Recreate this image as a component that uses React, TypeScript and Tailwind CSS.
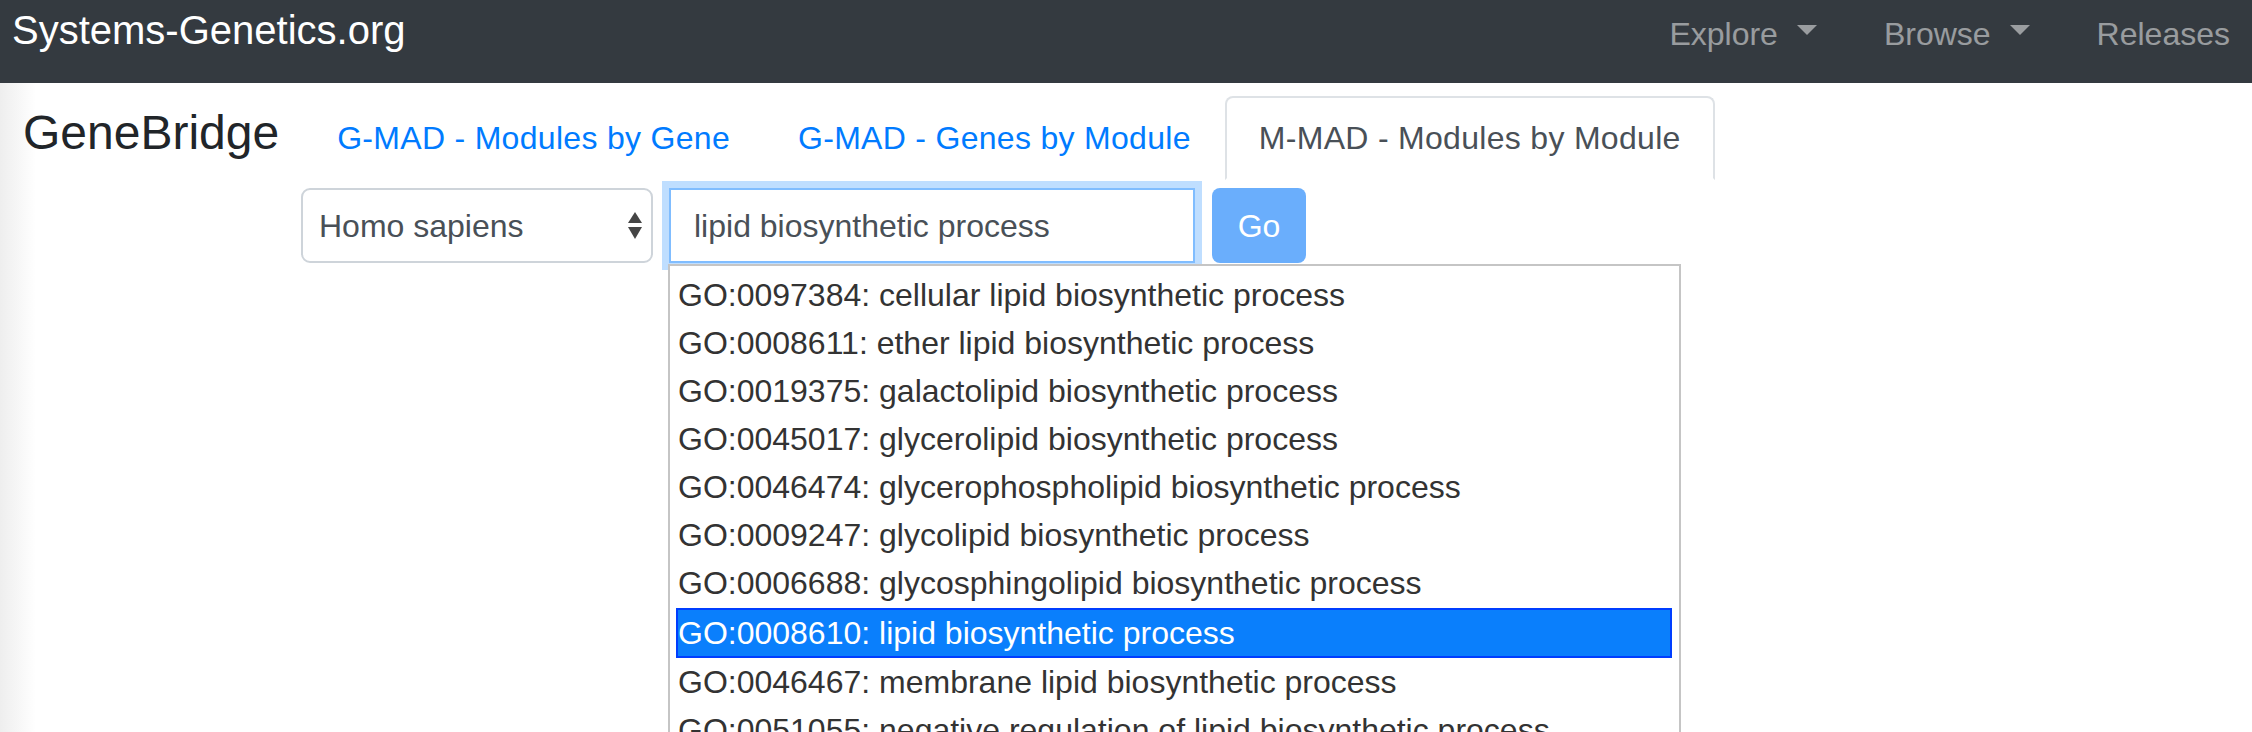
import React from "react";

const items = [
  "GO:0097384: cellular lipid biosynthetic process",
  "GO:0008611: ether lipid biosynthetic process",
  "GO:0019375: galactolipid biosynthetic process",
  "GO:0045017: glycerolipid biosynthetic process",
  "GO:0046474: glycerophospholipid biosynthetic process",
  "GO:0009247: glycolipid biosynthetic process",
  "GO:0006688: glycosphingolipid biosynthetic process",
  "GO:0008610: lipid biosynthetic process",
  "GO:0046467: membrane lipid biosynthetic process",
  "GO:0051055: negative regulation of lipid biosynthetic process",
];

function Caret() {
  return (
    <span className="ml-[19px] inline-block h-0 w-0 border-x-[10.5px] border-t-[10.5px] border-x-transparent border-t-current align-[0.3em]" />
  );
}

export default function App() {
  return (
    <div className="relative h-[732px] w-[2252px] overflow-hidden bg-white font-['Liberation_Sans',Arial,sans-serif]">
      <nav className="flex h-[83px] items-start justify-between bg-[#343a40]">
        <div className="pl-[12px] text-[40px] leading-[60px] text-white">Systems-Genetics.org</div>
        <div className="flex gap-[67px] pr-[22px] pt-[10px] text-[32px] leading-[48px] text-white/50">
          <span>
            Explore
            <Caret />
          </span>
          <span>
            Browse
            <Caret />
          </span>
          <span>Releases</span>
        </div>
      </nav>
      <div className="h-[649px] bg-[linear-gradient(to_right,#eeeeee,#ffffff_36px)]">
        <div className="flex items-start pt-[13px]">
          <h4 className="mt-[8px] pl-[23px] text-[48px] leading-[58px] text-[#212529]">GeneBridge</h4>
          <div className="ml-[24px] flex text-[32px] leading-[48px] tracking-[0.3px]">
            <a className="rounded-t-[8px] border-2 border-transparent px-[32px] py-[16px] text-[#007bff]">
              G-MAD - Modules by Gene
            </a>
            <a className="rounded-t-[8px] border-2 border-transparent px-[32px] py-[16px] text-[#007bff]">
              G-MAD - Genes by Module
            </a>
            <a className="rounded-t-[8px] border-2 border-[#dee2e6] border-b-white bg-white px-[32px] py-[16px] text-[#495057]">
              M-MAD - Modules by Module
            </a>
          </div>
        </div>
        <div className="mt-[8px] flex items-start pl-[301px]">
          <div className="flex h-[75px] w-[352px] items-center justify-between rounded-[9px] border-2 border-[#ced4da] bg-white pl-[16px] pr-[8px] text-[32px] text-[#495057]">
            <span>Homo sapiens</span>
            <svg width="16" height="30" viewBox="0 0 16 30">
              <path d="M1 12 L8 1 L15 12 Z" fill="#454545" />
              <path d="M1 16 L8 28 L15 16 Z" fill="#454545" />
            </svg>
          </div>
          <div className="relative ml-[16px]">
            <div className="flex h-[75px] w-[526px] items-center border-2 border-[#80bdff] bg-white pl-[23px] text-[32px] text-[#495057] shadow-[0_0_0_7px_rgba(0,123,255,0.25)]">
              lipid biosynthetic process
            </div>
            <div className="absolute left-[-1px] top-[76px] z-10 w-[1013px] border-2 border-[#c5c5c5] bg-white pt-[5px] text-[32px] text-[#333333]">
              {items.map((t, i) => (
                <div
                  key={t}
                  className={
                    i === 7
                      ? "ml-[6px] mr-[7px] mt-[1px] h-[50px] whitespace-nowrap border-2 border-[#003eff] bg-[#0a7ffc] leading-[46px] text-white"
                      : "ml-[6px] mr-[7px] h-[48px] whitespace-nowrap border-2 border-transparent leading-[44px]"
                  }
                >
                  {t}
                </div>
              ))}
            </div>
          </div>
          <button className="ml-[17px] flex h-[75px] w-[94px] items-center justify-center rounded-[8px] bg-[#6aaefc] text-[32px] text-white">
            Go
          </button>
        </div>
      </div>
    </div>
  );
}
